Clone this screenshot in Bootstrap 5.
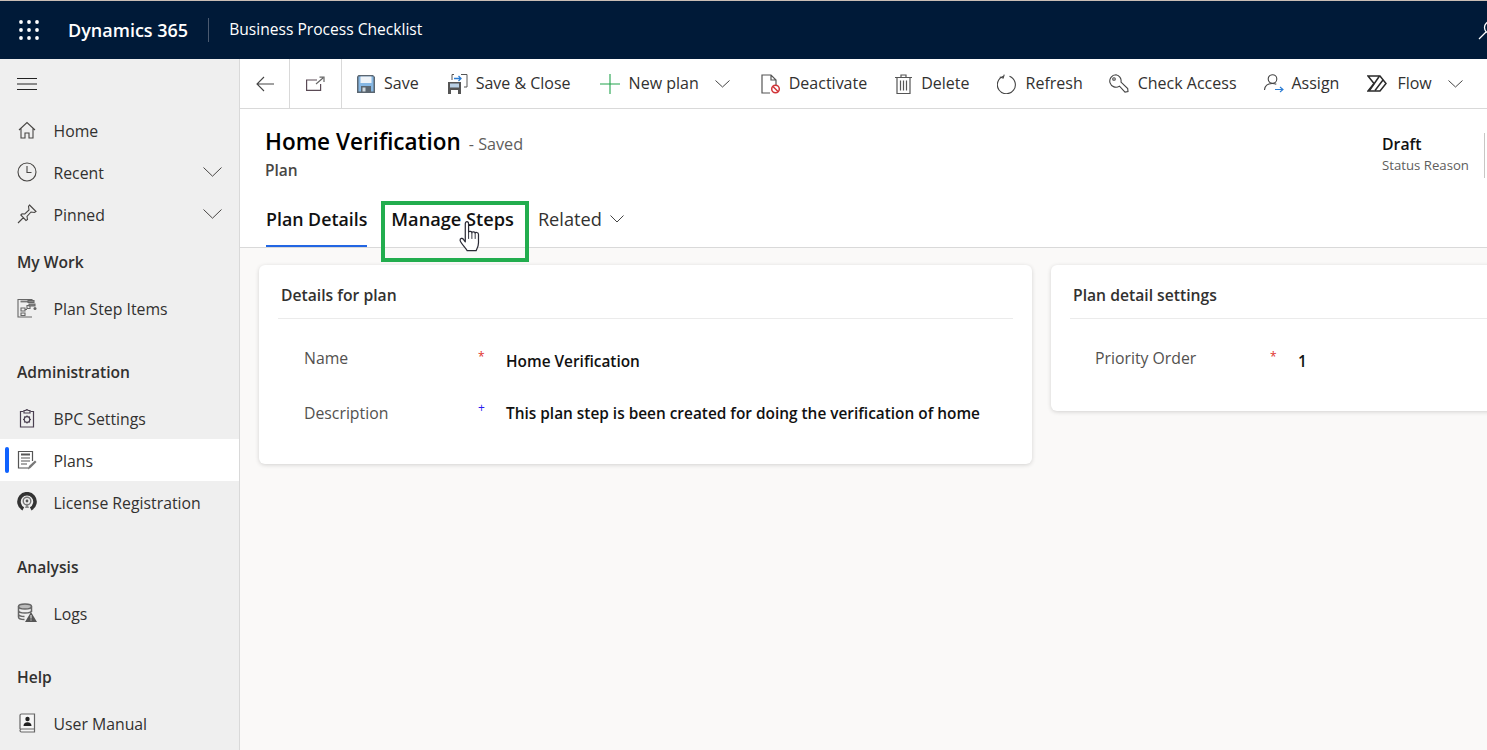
<!DOCTYPE html>
<html lang="en">
<head>
    <meta charset="UTF-8">
    <meta name="viewport" content="width=device-width, initial-scale=1.0">
    <title>Business Process Checklist</title>
    <link href="https://cdn.jsdelivr.net/npm/bootstrap@5.3.0/dist/css/bootstrap.min.css" rel="stylesheet">
    <style>
        html, body { height: 100%; overflow: hidden; }
        body { font-family: "Open Sans", "Noto Sans", sans-serif; font-size: 15.8px; color: #323130; background: #faf9f8; }
        svg { display: block; flex: none; }

        .shell-bar { height: 59px; background: #001a38; border-top: 1px solid #c9bdb4; color: #fff; }
        .waffle-btn { width: 57px; padding-left: 19px; }
        .brand-name { font-size: 18px; font-weight: 600; padding: 0 20px 0 11px; }
        .brand-sep { width: 1px; height: 24px; background: #4a5a70; }
        .app-name { font-size: 15.6px; padding-left: 20px; }
        .search-glyph { margin-right: -11px; }

        .work-area { height: calc(100vh - 59px); }

        .side-nav { width: 240px; flex: none; background: #efefef; border-right: 1px solid #d9d9d9; }
        .burger-row { height: 50px; padding-left: 17px; }
        .side-link { height: 42px; padding: 0 17px; color: #323130; position: relative; }
        .side-link:hover { color: #323130; background: #e6e6e6; }
        .side-link .side-text { padding: 4px 0 0 16.5px; }
        .side-link.is-current { background: #fff; }
        .side-link.is-current::before { content: ""; position: absolute; left: 5px; top: 8px; bottom: 8px; width: 4px; border-radius: 2px; background: #0f62fe; }
        .side-head { height: 52px; padding: 4px 0 0 17px; font-weight: 600; font-size: 15.6px; color: #323130; }
        .side-gap { margin-top: 16px; }
        .side-gap-wide { margin-top: 17px; }

        .main-pane { min-width: 0; background: #faf9f8; }
        .cmd-bar { height: 50px; background: #fff; border-bottom: 1px solid #d9d9d9; }
        .cmd-cell { height: 49px; border-right: 1px solid #d9d9d9; }
        .cmd-back { width: 50px; }
        .cmd-pop { width: 52px; }
        .cmd-btn { color: #323130; padding: 0; border: 0; background: none; font-size: 16px; white-space: nowrap; }
        .cmd-label { padding-left: 9px; margin-top: -1px; }
        .cmd-label-tight { padding-left: 8px; }
        .cmd-label-wide { padding-left: 10px; }

        .form-head { height: 139px; background: #fff; border-bottom: 1px solid #d9d9d9; padding-left: 25px; position: relative; }
        .rec-title { font-size: 22.5px; font-weight: 600; color: #000; line-height: 32px; padding-top: 17px; }
        .rec-saved { font-size: 16.2px; font-weight: 400; color: #605e5c; padding-left: 8px; }
        .rec-type { font-weight: 600; color: #484644; line-height: 24px; font-size: 15.5px; margin-top: -2px; }
        .rec-status { position: absolute; right: 2px; top: 24px; height: 45px; border-right: 1px solid #c8c6c4; width: 103px; }
        .status-val { font-weight: 600; color: #111; line-height: 22px; }
        .status-lbl { font-size: 13.2px; color: #605e5c; line-height: 20px; }

        .form-tabs { margin-top: 25px; margin-left: 1px; gap: 24px; }
        .form-tabs .nav-link { padding: 0; height: 40px; line-height: 24px; font-size: 18.2px; color: #323130; border-bottom: 2px solid transparent; border-radius: 0; }
        .form-tabs .nav-link.active { font-size: 17.8px; font-weight: 600; color: #111; border-bottom-color: #2266e3; }
        .form-tabs .nav-link.tab-strong { font-size: 18.2px; font-weight: 600; color: #111; }

        .step-frame { position: absolute; left: 141px; top: 92px; width: 148px; height: 61px; border: 4px solid #22ad4e; pointer-events: none; }
        .hand-glyph { position: absolute; left: 218px; top: 112px; }

        .sheet-area { padding: 17px 0 0 19px; gap: 19px; overflow: hidden; }
        .sheet { border: 0; border-radius: 6px; box-shadow: 0 1px 4px rgba(0,0,0,.16); flex: none; }
        .sheet-one { width: 773px; height: 199px; }
        .sheet-two { width: 480px; height: 146px; }
        .sheet-title { margin: 0 19px; padding: 9px 3px 0; height: 54px; border-bottom: 1px solid #ebebeb; font-size: 15.7px; font-weight: 600; color: #323130; }
        .sheet-fields { padding: 17px 0 0 45px; }
        .sheet-two .sheet-fields { padding-left: 44px; }
        .field-row { height: 55px; }
        .field-lbl { width: 174px; color: #53514f; padding-top: 11px; flex: none; }
        .field-mark { width: 28px; font-size: 12px; line-height: 14px; flex: none; }
        .mark-red { color: #e0302a; padding-top: 14px; }
        .mark-blue { color: #2a1cf0; padding-top: 10px; }
        .field-val { font-weight: 600; color: #111; padding-top: 14px; font-size: 15.4px; white-space: nowrap; }
        .field-val-up { padding-top: 11px; }
        .sheet-two .field-lbl { width: 175px; }
    </style>
</head>
<body>

<div class="shell-bar d-flex align-items-center">
    <div class="waffle-btn">
        <svg width="20" height="20" viewBox="0 0 20 20" fill="#fff">
            <circle cx="2" cy="2" r="1.9"/><circle cx="10" cy="2" r="1.9"/><circle cx="18" cy="2" r="1.9"/>
            <circle cx="2" cy="10" r="1.9"/><circle cx="10" cy="10" r="1.9"/><circle cx="18" cy="10" r="1.9"/>
            <circle cx="2" cy="18" r="1.9"/><circle cx="10" cy="18" r="1.9"/><circle cx="18" cy="18" r="1.9"/>
        </svg>
    </div>
    <div class="brand-name">Dynamics 365</div>
    <div class="brand-sep"></div>
    <div class="app-name">Business Process Checklist</div>
    <svg class="search-glyph ms-auto" width="20" height="20" viewBox="0 0 20 20" fill="none" stroke="#fff" stroke-width="1.3">
        <circle cx="12.5" cy="7.5" r="6"/><path d="M8 12 1 19"/>
    </svg>
</div>

<div class="work-area d-flex">
    <nav class="side-nav d-flex flex-column">
        <div class="burger-row d-flex align-items-center">
            <svg width="20" height="12" viewBox="0 0 20 12" stroke="#222" stroke-width="1"><path d="M0 .5h20M0 6h20M0 11.500h20"/></svg>
        </div>
        <a class="side-link d-flex align-items-center text-decoration-none" href="#">
            <svg width="20" height="20" viewBox="0 0 20 20" fill="none" stroke="#484644" stroke-width="1.100"><path d="M2 10 10 2.500l8 7.500M4 8.500V18h4v-5h4v5h4V8.500"/></svg>
            <span class="side-text">Home</span>
        </a>
        <a class="side-link d-flex align-items-center text-decoration-none" href="#">
            <svg width="20" height="20" viewBox="0 0 20 20" fill="none" stroke="#484644" stroke-width="1.100"><circle cx="10" cy="10" r="9"/><path d="M10 4v6.500h4.500"/></svg>
            <span class="side-text flex-grow-1">Recent</span>
            <svg width="19" height="10" viewBox="0 0 19 10" fill="none" stroke="#484644"><path d="M.5.5 9.500 9.200 18.500.5"/></svg>
        </a>
        <a class="side-link d-flex align-items-center text-decoration-none" href="#">
            <svg width="20" height="20" viewBox="0 0 20 20" fill="none" stroke="#484644" stroke-width="1.100"><path d="M12.500 1 19 7.500 17.500 8.500 14 8 10 12.500 10.500 15.500 9 16.500 3.800 11 5 9.800 7.800 10 12 6 11.500 2.500ZM6.500 13.500 1 19"/></svg>
            <span class="side-text flex-grow-1">Pinned</span>
            <svg width="19" height="10" viewBox="0 0 19 10" fill="none" stroke="#484644"><path d="M.5.5 9.500 9.200 18.500.5"/></svg>
        </a>

        <div class="side-head d-flex align-items-center">My Work</div>
        <a class="side-link d-flex align-items-center text-decoration-none" href="#">
            <svg width="20" height="20" viewBox="0 0 20 20" fill="none" stroke="#666" stroke-width="1.100"><path d="M15 19H1V1.500h14V4"/><path d="M3.500 3.500h8" stroke-width="1.800" stroke="#777"/><path d="M4 10h4v3H4zM10 7.500h3v3h-3zM4 15h4v2.500H4zM8 11.500h2"/><path d="M11 2.500h6v2h-6zM12 6h6v2h-6z" fill="#888"/><circle cx="18" cy="10.500" r="1.500" fill="#666" stroke="none"/></svg>
            <span class="side-text">Plan Step Items</span>
        </a>

        <div class="side-head side-gap d-flex align-items-center">Administration</div>
        <a class="side-link d-flex align-items-center text-decoration-none" href="#">
            <svg width="20" height="20" viewBox="0 0 20 20" fill="none" stroke="#4a3f50" stroke-width="1.200"><path d="M6.500 3.500H3.500V19h13V3.500h-3"/><path d="M7 5V2.500h2a1 1 0 0 1 2 0h2V5z"/><circle cx="10" cy="11.500" r="2.800"/><path d="M10 7.500v1.200M10 14.300v1.200M6 11.500h1.200M12.800 11.500H14M7.200 8.700l.8.800M12 13.500l.8.800M7.200 14.300l.8-.8M12 9.500l.8-.8"/></svg>
            <span class="side-text">BPC Settings</span>
        </a>
        <a class="side-link is-current d-flex align-items-center text-decoration-none" href="#">
            <svg width="20" height="20" viewBox="0 0 20 20" fill="none" stroke="#555" stroke-width="1.200"><path d="M12 18H1.500V1.500h14V11"/><path d="M4 4.500h9" stroke-width="2"/><path d="M4 8h9M4 11h9M4 14h6"/><path d="M11 19.500 12 16l6-5.500 1.500 1.500-6 6z" fill="#777" stroke="none"/></svg>
            <span class="side-text">Plans</span>
        </a>
        <a class="side-link d-flex align-items-center text-decoration-none" href="#">
            <svg width="20" height="20" viewBox="0 0 20 20" fill="none"><path d="M6.300 16.800A8 8 0 1 1 13.700 16.800" stroke="#333" stroke-width="3.600"/><circle cx="10" cy="9" r="3.800" stroke="#777" stroke-width="1.400"/><circle cx="10" cy="9" r="1.400" fill="#555"/><path d="M8 16 10 11l2 5z" fill="#888"/></svg>
            <span class="side-text">License Registration</span>
        </a>

        <div class="side-head side-gap-wide d-flex align-items-center">Analysis</div>
        <a class="side-link d-flex align-items-center text-decoration-none" href="#">
            <svg width="20" height="20" viewBox="0 0 20 20" fill="none" stroke="#666" stroke-width="1.500"><ellipse cx="8" cy="3.500" rx="6.500" ry="2.500" fill="#bbb"/><path d="M1.500 3.500V14c0 1.500 3 2.500 6 2.500M14.500 3.500V9M1.500 7.500c0 1.500 3 2.500 6.500 2.500s6.500-1 6.500-2.500M1.500 11c0 1.500 3 2.500 6 2.500"/><path d="M14 9 20 19H8z" fill="#555" stroke="none"/><path d="M14 12v3.500M14 16.500v1" stroke="#efefef" stroke-width="1"/></svg>
            <span class="side-text">Logs</span>
        </a>

        <div class="side-head side-gap d-flex align-items-center">Help</div>
        <a class="side-link d-flex align-items-center text-decoration-none" href="#">
            <svg width="20" height="20" viewBox="0 0 20 20" fill="none" stroke="#666" stroke-width="1.200"><path d="M3 16V2.500a1.500 1.500 0 0 1 1.500-1.500H17.500v15H4.500a1.500 1.500 0 0 0 0 3h13V16" fill="#f6f6f6"/><circle cx="10.500" cy="6" r="2.200" fill="#222" stroke="none"/><path d="M6.500 13c0-2.500 1.500-3.800 4-3.800s4 1.300 4 3.800z" fill="#222" stroke="none"/></svg>
            <span class="side-text">User Manual</span>
        </a>
    </nav>

    <div class="main-pane flex-grow-1 d-flex flex-column">
        <div class="cmd-bar d-flex align-items-center">
            <div class="cmd-cell cmd-back d-flex align-items-center justify-content-center">
                <svg width="18" height="16" viewBox="0 0 18 16" fill="none" stroke="#444" stroke-width="1.100"><path d="M18 8H1M8 1 1 8l7 7"/></svg>
            </div>
            <div class="cmd-cell cmd-pop d-flex align-items-center justify-content-center">
                <svg width="19" height="15" viewBox="0 0 19 15" fill="none" stroke="#5a4a55" stroke-width="1.200"><path d="M11 4H.6v10.400h14V8"/><path d="M10 8 17 2M13.500 1.200h4.500V6" stroke="#666"/></svg>
            </div>
            <button class="cmd-btn d-flex align-items-center" style="margin-left:15px" type="button">
                <svg width="18" height="18" viewBox="0 0 18 18"><path d="M0 1.500 1.500 0H16L18 2V18H0Z" fill="#5b6670"/><path d="M1.500 1.500h15V16.500H1.500z" fill="#86b7e3"/><path d="M3.500 1.500h11V8h-11z" fill="#eef3f8"/><path d="M4 11h10v7H4z" fill="#5b6670"/><path d="M5.500 12.500h3v4h-3z" fill="#cfd8df"/></svg>
                <span class="cmd-label">Save</span>
            </button>
            <button class="cmd-btn d-flex align-items-center" style="margin-left:29px" type="button">
                <svg width="20" height="20" viewBox="0 0 20 20"><path d="M0 8h13v12H0Z" fill="#555"/><path d="M2 9.500h9v4H2z" fill="#b9cfe4"/><path d="M3 16h7v4H3z" fill="#fff"/><path d="M4 6V.5h2M13 .5h6V13h-3" fill="none" stroke="#555"/><path d="M6 4.500h7M10.500 2l2.500 2.500L10.500 7" fill="none" stroke="#2b7cd3" stroke-width="1.300"/></svg>
                <span class="cmd-label cmd-label-tight">Save &amp; Close</span>
            </button>
            <button class="cmd-btn d-flex align-items-center" style="margin-left:29px" type="button">
                <svg width="20" height="20" viewBox="0 0 20 20" stroke="#22a34c" stroke-width="1.100"><path d="M10 0v20M0 10h20"/></svg>
                <span class="cmd-label">New plan</span>
            </button>
            <svg class="ms-3" width="15" height="8" viewBox="0 0 15 8" fill="none" stroke="#444"><path d="M.5.5l7 6.500 7-6.500"/></svg>
            <button class="cmd-btn d-flex align-items-center" style="margin-left:31px" type="button">
                <svg width="20" height="20" viewBox="0 0 20 20" fill="none" stroke="#555" stroke-width="1.200"><path d="M9 19H1V1h9l5 5v5M10 1v5h5"/><circle cx="14.500" cy="15" r="3.800" stroke="#d13438" stroke-width="1.500"/><path d="M12 12.500l5 5" stroke="#d13438" stroke-width="1.500"/></svg>
                <span class="cmd-label cmd-label-tight">Deactivate</span>
            </button>
            <button class="cmd-btn d-flex align-items-center" style="margin-left:28px" type="button">
                <svg width="17" height="20" viewBox="0 0 17 20" fill="none" stroke="#555" stroke-width="1.200"><path d="M0 3.500h17M6 3.500V1h5v2.500M2 3.500V19.500h13V3.500"/><path d="M5.500 6.500v10M8.500 6.500v10M11.500 6.500v10"/></svg>
                <span class="cmd-label">Delete</span>
            </button>
            <button class="cmd-btn d-flex align-items-center" style="margin-left:27px" type="button">
                <svg width="20" height="20" viewBox="0 0 20 20" fill="none" stroke="#444" stroke-width="1.100"><path d="M12.500 2.300A9 9 0 1 1 6.500 2.200"/><path d="M7 .5 6.500 4 3 3.500" transform="rotate(10 6 2)"/></svg>
                <span class="cmd-label">Refresh</span>
            </button>
            <button class="cmd-btn d-flex align-items-center" style="margin-left:26px" type="button">
                <svg width="20" height="20" viewBox="0 0 20 20" fill="none" stroke="#444" stroke-width="1.100"><path d="M7 .8a6.200 6.200 0 1 0 3.500 11.300l5.500 6 3-.5-.3-3-6.700-6.500A6.200 6.200 0 0 0 7 .8Z"/><circle cx="5" cy="5" r="1.300"/></svg>
                <span class="cmd-label">Check Access</span>
            </button>
            <button class="cmd-btn d-flex align-items-center" style="margin-left:27px" type="button">
                <svg width="20" height="19" viewBox="0 0 20 19" fill="none" stroke="#444" stroke-width="1.100"><circle cx="8.500" cy="5" r="4.300"/><path d="M.5 16c.3-4 3.200-6.500 8-6.500 1.500 0 2.800.3 3.800.8"/><path d="M11 15.500h8M16 13l3 2.500-3 2.500" stroke="#2b7cd3"/></svg>
                <span class="cmd-label cmd-label-tight">Assign</span>
            </button>
            <button class="cmd-btn d-flex align-items-center" style="margin-left:28px" type="button">
                <svg width="20" height="17" viewBox="0 0 20 17" fill="none" stroke="#2a2a2a" stroke-width="1.500"><path d="M1 1h12l6 7.500-6 7.500H1l6-7.500Z"/><path d="M12.500 1 2.500 15.500M16 5 8 15.500"/></svg>
                <span class="cmd-label cmd-label-wide">Flow</span>
            </button>
            <svg class="ms-3" width="15" height="8" viewBox="0 0 15 8" fill="none" stroke="#444"><path d="M.5.5l7 6.500 7-6.500"/></svg>
        </div>

        <div class="form-head">
            <div class="rec-title">Home Verification<span class="rec-saved">- Saved</span></div>
            <div class="rec-type">Plan</div>
            <div class="rec-status">
                <div class="status-val">Draft</div>
                <div class="status-lbl">Status Reason</div>
            </div>
            <ul class="nav form-tabs">
                <li class="nav-item"><a class="nav-link active" href="#">Plan Details</a></li>
                <li class="nav-item"><a class="nav-link tab-strong" href="#">Manage Steps</a></li>
                <li class="nav-item"><a class="nav-link d-flex align-items-start gap-2" href="#">Related
                    <svg class="mt-2" width="14" height="8" viewBox="0 0 14 8" fill="none" stroke="#444"><path d="M.5.5 7 7l6.500-6.500"/></svg>
                </a></li>
            </ul>
            <div class="step-frame"></div>
            <svg class="hand-glyph" width="24" height="33" viewBox="0 0 24 35">
                <path d="M7 3c0-3 3.500-3 3.500 0v9c0-1.500 3.500-1.500 3.500.5 0-1.500 3.500-1.500 3.500.5 0-1.500 3.500-1 3.500 1v9c0 4-1.500 6-2.500 8.500H9c-1-2.500-7-8-7.500-11-.3-2 2.500-3 3.500-1l2 2.500Z" fill="#fff" stroke="#2a2a35" stroke-width="1.300" stroke-linejoin="round"/>
                <path d="M10.500 12v7M14 12.500v6.500M17.500 13v6" stroke="#2a2a35" stroke-width="1"/>
            </svg>
        </div>

        <div class="sheet-area d-flex align-items-start flex-grow-1">
            <div class="card sheet sheet-one">
                <div class="sheet-title d-flex align-items-center">Details for plan</div>
                <div class="sheet-fields">
                    <div class="field-row d-flex">
                        <div class="field-lbl">Name</div>
                        <div class="field-mark mark-red">*</div>
                        <div class="field-val">Home Verification</div>
                    </div>
                    <div class="field-row d-flex">
                        <div class="field-lbl">Description</div>
                        <div class="field-mark mark-blue">+</div>
                        <div class="field-val field-val-up">This plan step is been created for doing the verification of home</div>
                    </div>
                </div>
            </div>
            <div class="card sheet sheet-two">
                <div class="sheet-title d-flex align-items-center">Plan detail settings</div>
                <div class="sheet-fields">
                    <div class="field-row d-flex">
                        <div class="field-lbl">Priority Order</div>
                        <div class="field-mark mark-red">*</div>
                        <div class="field-val">1</div>
                    </div>
                </div>
            </div>
        </div>
    </div>
</div>

<script src="https://cdn.jsdelivr.net/npm/bootstrap@5.3.0/dist/js/bootstrap.bundle.min.js"></script>
</body>
</html>
